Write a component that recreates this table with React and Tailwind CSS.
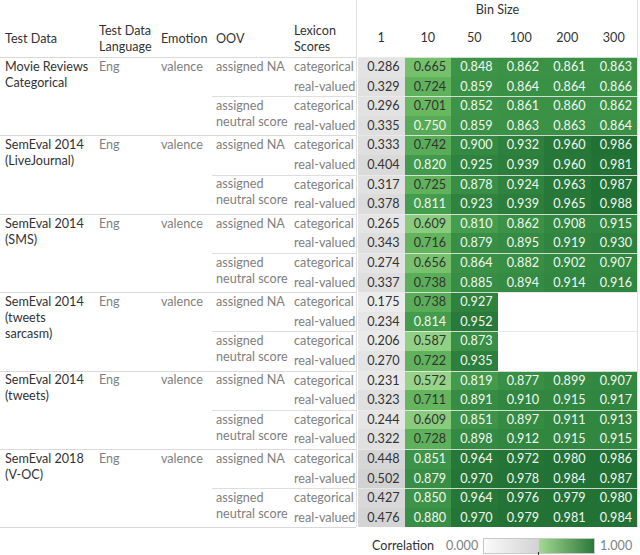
import React from "react";

const groups = [
  {
    name: ["Movie Reviews", "Categorical"],
    rows: [
      [0.286, 0.665, 0.848, 0.862, 0.861, 0.863],
      [0.329, 0.724, 0.859, 0.864, 0.864, 0.866],
      [0.296, 0.701, 0.852, 0.861, 0.86, 0.862],
      [0.335, 0.75, 0.859, 0.863, 0.863, 0.864],
    ],
  },
  {
    name: ["SemEval 2014", "(LiveJournal)"],
    rows: [
      [0.333, 0.742, 0.9, 0.932, 0.96, 0.986],
      [0.404, 0.82, 0.925, 0.939, 0.96, 0.981],
      [0.317, 0.725, 0.878, 0.924, 0.963, 0.987],
      [0.378, 0.811, 0.923, 0.939, 0.965, 0.988],
    ],
  },
  {
    name: ["SemEval 2014", "(SMS)"],
    rows: [
      [0.265, 0.609, 0.81, 0.862, 0.908, 0.915],
      [0.343, 0.716, 0.879, 0.895, 0.919, 0.93],
      [0.274, 0.656, 0.864, 0.882, 0.902, 0.907],
      [0.337, 0.738, 0.885, 0.894, 0.914, 0.916],
    ],
  },
  {
    name: ["SemEval 2014", "(tweets", "sarcasm)"],
    rows: [
      [0.175, 0.738, 0.927],
      [0.234, 0.814, 0.952],
      [0.206, 0.587, 0.873],
      [0.27, 0.722, 0.935],
    ],
  },
  {
    name: ["SemEval 2014", "(tweets)"],
    rows: [
      [0.231, 0.572, 0.819, 0.877, 0.899, 0.907],
      [0.323, 0.711, 0.891, 0.91, 0.915, 0.917],
      [0.244, 0.609, 0.851, 0.897, 0.911, 0.913],
      [0.322, 0.728, 0.898, 0.912, 0.915, 0.915],
    ],
  },
  {
    name: ["SemEval 2018", "(V-OC)"],
    rows: [
      [0.448, 0.851, 0.964, 0.972, 0.98, 0.986],
      [0.502, 0.879, 0.97, 0.978, 0.984, 0.987],
      [0.427, 0.85, 0.964, 0.976, 0.979, 0.98],
      [0.476, 0.88, 0.97, 0.979, 0.981, 0.984],
    ],
  },
];

const bins = ["1", "10", "50", "100", "200", "300"];

const stops = [
  [0.55, [160, 216, 146]],
  [0.6, [140, 206, 128]],
  [0.7, [104, 184, 96]],
  [0.8, [70, 158, 78]],
  [0.9, [52, 138, 66]],
  [1.0, [30, 108, 50]],
];

function cellColor(v) {
  if (v < 0.55) {
    const g = Math.round(250 - 80 * v);
    return `rgb(${g},${g},${g})`;
  }
  for (let i = 0; i < stops.length - 1; i++) {
    const [a, ca] = stops[i];
    const [b, cb] = stops[i + 1];
    if (v <= b) {
      const t = (v - a) / (b - a);
      const c = ca.map((x, k) => Math.round(x + (cb[k] - x) * t));
      return `rgb(${c[0]},${c[1]},${c[2]})`;
    }
  }
  const c = stops[stops.length - 1][1];
  return `rgb(${c[0]},${c[1]},${c[2]})`;
}

function Cell({ v, top }) {
  const white = v >= 0.75;
  return (
    <div
      className={`w-[46.5px] h-[19.6px] leading-[19.6px] text-right pr-[5px] ${
        white ? "text-[#f2f7f2]" : "text-[#333]"
      } ${top ? "shadow-[inset_0_1px_0_rgba(235,235,235,0.85)]" : ""}`}
      style={{ backgroundColor: cellColor(v) }}
    >
      {v.toFixed(3)}
    </div>
  );
}

function EmptyCell({ top }) {
  return (
    <div
      className={`w-[46.5px] h-[19.6px] ${
        top ? "shadow-[inset_0_1px_0_#e8e8e8]" : ""
      }`}
    />
  );
}

function NumRow({ row, top }) {
  return (
    <div className="flex">
      {bins.map((b, i) =>
        i < row.length ? (
          <Cell key={b} v={row[i]} top={top} />
        ) : (
          <EmptyCell key={b} top={top} />
        )
      )}
    </div>
  );
}

function Group({ g }) {
  return (
    <div className="flex h-[78.4px]">
      <div className="flex w-[356px] shadow-[inset_0_1px_0_#d9d9d9] whitespace-nowrap">
        <div className="w-[95px] pl-[5px] pt-[1.8px] leading-[16px] text-[#333]">
          {g.name.map((n) => (
            <div key={n}>{n}</div>
          ))}
        </div>
        <div className="w-[62px] pl-[4px] pt-[1.8px] leading-[16px] text-[#808080]">
          Eng
        </div>
        <div className="w-[55px] pl-[4px] pt-[1.8px] leading-[16px] text-[#808080]">
          valence
        </div>
        <div className="flex flex-col w-[144px]">
          {[0, 1].map((s) => (
            <div
              key={s}
              className={`flex h-[39.2px] ${
                s === 1 ? "shadow-[inset_0_1px_0_#dedede]" : ""
              }`}
            >
              <div className="w-[78px] pl-[4px] pt-[1.8px] leading-[16px] text-[#808080]">
                {s === 0 ? (
                  "assigned NA"
                ) : (
                  <>
                    <div>assigned</div>
                    <div>neutral score</div>
                  </>
                )}
              </div>
              <div className="w-[66px] pl-[4px] text-[#808080]">
                <div className="h-[19.6px] leading-[19.6px]">categorical</div>
                <div className="h-[19.6px] leading-[19.6px]">real-valued</div>
              </div>
            </div>
          ))}
        </div>
      </div>
      <div className="w-px bg-[#e0e0e0]" />
      <div className="w-px" />
      <div className="flex flex-col w-[279px]">
        {g.rows.map((r, i) => (
          <NumRow key={i} row={r} top={i % 2 === 0} />
        ))}
      </div>
      <div className="w-px bg-[#e0e0e0]" />
    </div>
  );
}

export default function App() {
  return (
    <div className="w-[640px] h-[555px] overflow-hidden bg-white font-['Lato',sans-serif] text-[12.6px]">
      <div className="flex h-[57px]">
        <div className="flex w-[356px] pt-[20px] text-[#333] leading-[16px] whitespace-nowrap">
          <div className="w-[95px] pl-[5px] flex items-center">Test Data</div>
          <div className="w-[62px] pl-[4px] flex flex-col justify-center">
            <div>Test Data</div>
            <div>Language</div>
          </div>
          <div className="w-[55px] pl-[4px] flex items-center">Emotion</div>
          <div className="w-[78px] pl-[4px] flex items-center">OOV</div>
          <div className="w-[66px] pl-[4px] flex flex-col justify-center">
            <div>Lexicon</div>
            <div>Scores</div>
          </div>
        </div>
        <div className="w-px bg-[#e0e0e0]" />
        <div className="w-px" />
        <div className="flex flex-col w-[279px] text-[#333]">
          <div className="h-[20px] leading-[20px] text-center">Bin Size</div>
          <div className="flex flex-1 items-center">
            {bins.map((b) => (
              <div key={b} className="w-[46.5px] text-center">
                {b}
              </div>
            ))}
          </div>
        </div>
        <div className="w-px bg-[#e0e0e0]" />
      </div>
      {groups.map((g, i) => (
        <Group key={i} g={g} />
      ))}
      <div className="flex">
        <div className="w-[356px] h-px bg-[#d9d9d9]" />
      </div>
      <div className="flex items-center h-[26px] pl-[372px] pt-[10px]">
        <span className="text-[#333] w-[74px]">Correlation</span>
        <span className="text-[#808080] w-[37px]">0.000</span>
        <div className="relative flex w-[112px] h-[16px] border border-[#c8c8c8]">
          <div className="w-1/2 h-full bg-linear-to-r from-[#fbfbfb] to-[#d2d2d2]" />
          <div className="w-1/2 h-full bg-linear-to-r from-[#a3da93] to-[#2a783b]" />
          <div className="absolute left-[54px] bottom-[-2px] w-px h-[3px] bg-[#333]" />
        </div>
        <span className="text-[#808080] pl-[5px]">1.000</span>
      </div>
    </div>
  );
}
